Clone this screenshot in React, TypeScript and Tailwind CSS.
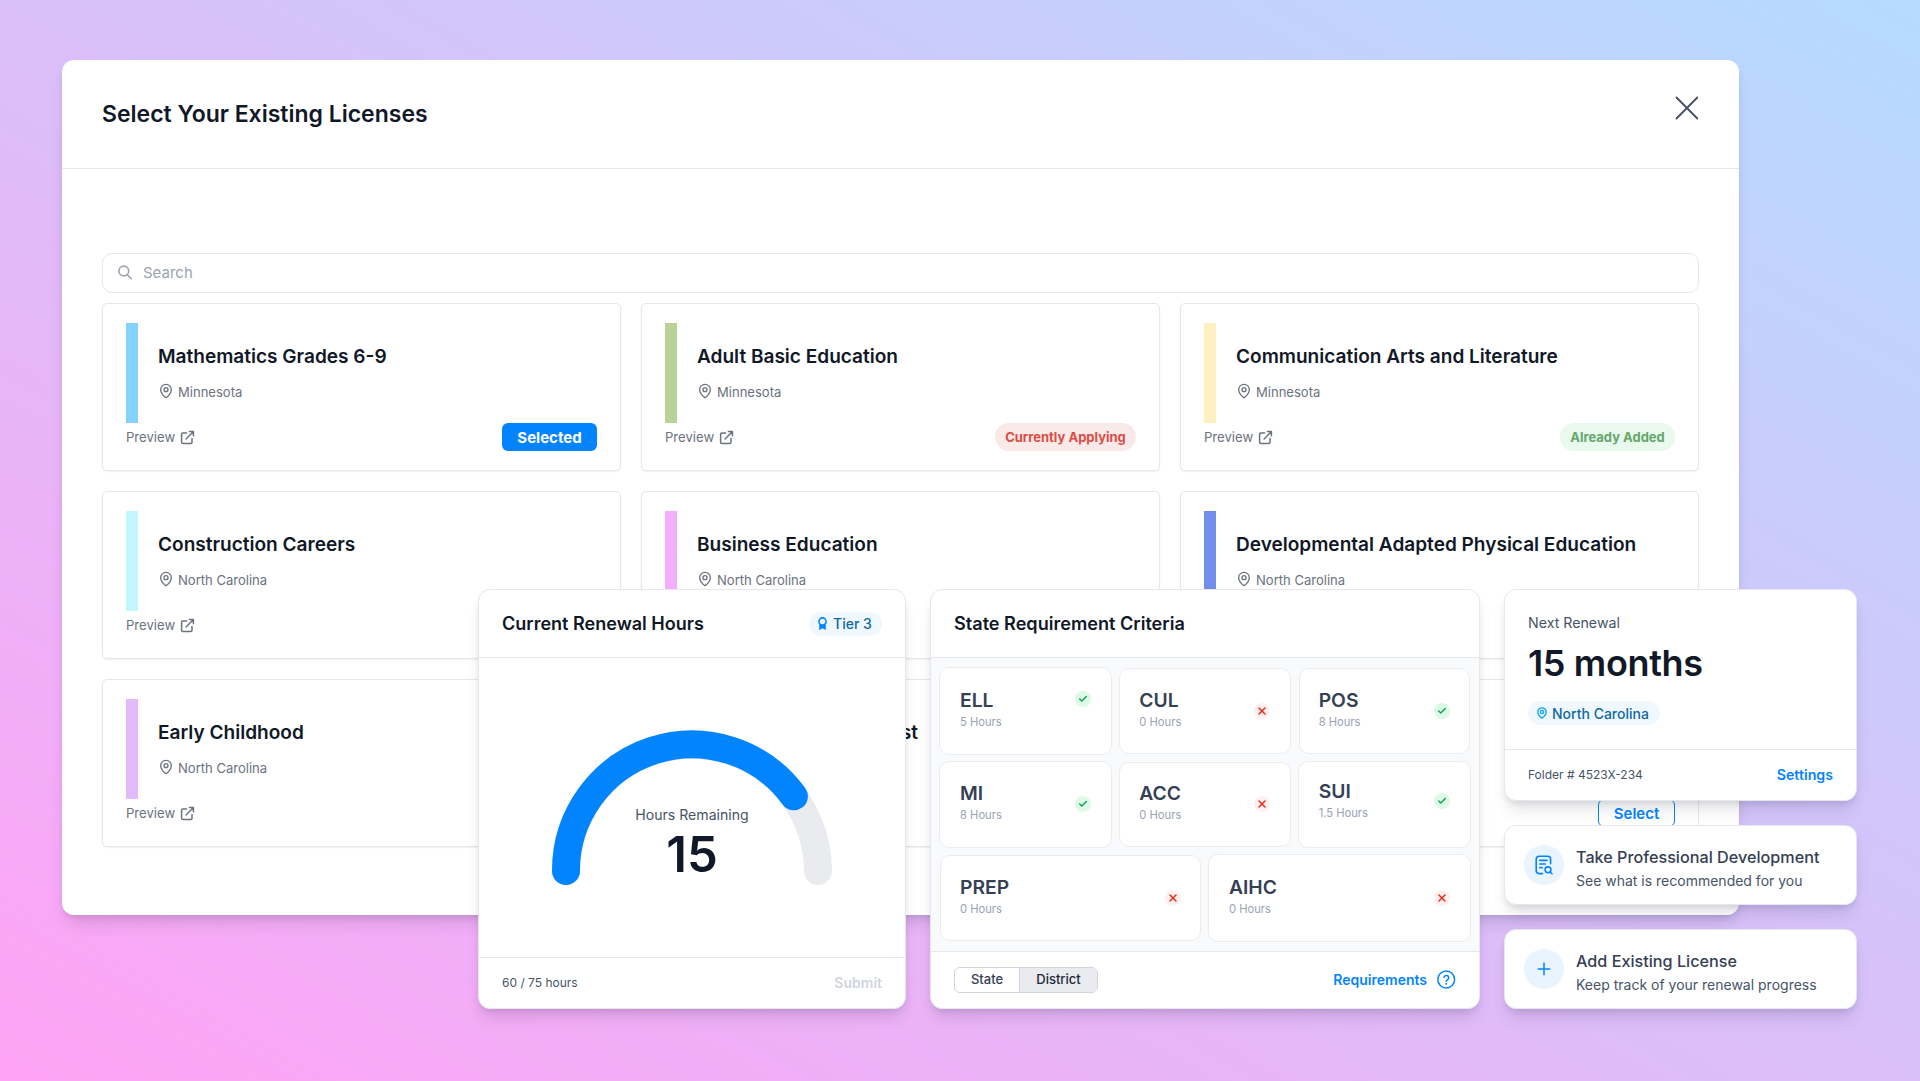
import type { ReactNode } from 'react';
import { Check, MapPin, Plus, X } from 'lucide-react';

type Status = 'selected' | 'applying' | 'added' | 'available';

interface License {
  id: number;
  name?: string;
  state?: string;
  bar: string;
  preview?: boolean;
  status?: Status;
}

interface Requirement {
  code: string;
  hours: string;
  met: boolean;
  cell: string;
  text?: string;
  icon?: string;
}

const LICENSES: License[] = [
  { id: 1, name: 'Mathematics Grades 6-9', state: 'Minnesota', bar: 'bg-[#84d2ff]', preview: true, status: 'selected' },
  { id: 2, name: 'Adult Basic Education', state: 'Minnesota', bar: 'bg-[#b8d297]', preview: true, status: 'applying' },
  { id: 3, name: 'Communication Arts and Literature', state: 'Minnesota', bar: 'bg-[#fff0c2]', preview: true, status: 'added' },
  { id: 4, name: 'Construction Careers', state: 'North Carolina', bar: 'bg-[#c2f6fd]', preview: true },
  { id: 5, name: 'Business Education', state: 'North Carolina', bar: 'bg-[#f3affd]' },
  { id: 6, name: 'Developmental Adapted Physical Education', state: 'North Carolina', bar: 'bg-[#708eea]' },
  { id: 7, name: 'Early Childhood', state: 'North Carolina', bar: 'bg-[#e4bbfa]', preview: true },
  { id: 8, name: 'Library Media Specialist', bar: 'bg-[#ffd6a5]' },
  { id: 9, bar: 'bg-[#a5e8c8]', status: 'available' },
];

const REQUIREMENTS: Requirement[] = [
  { code: 'ELL', hours: '5 Hours', met: true, cell: 'col-span-2 -m-px pr-5 pl-5', icon: 'mb-6' },
  { code: 'CUL', hours: '0 Hours', met: false, cell: 'col-span-2 pr-5 pl-[19px]' },
  { code: 'POS', hours: '8 Hours', met: true, cell: 'col-span-2 pr-[19px] pl-[19px]' },
  { code: 'MI', hours: '8 Hours', met: true, cell: 'col-span-2 -m-px pr-5 pl-5' },
  { code: 'ACC', hours: '0 Hours', met: false, cell: 'col-span-2 pr-5 pl-[19px]' },
  { code: 'SUI', hours: '1.5 Hours', met: true, cell: 'col-span-2 -m-px pr-5 pl-5', text: 'mb-2', icon: 'mb-1.5' },
  { code: 'PREP', hours: '0 Hours', met: false, cell: 'col-span-3 pr-[19px] pl-[19px]' },
  { code: 'AIHC', hours: '0 Hours', met: false, cell: 'col-span-3 -m-px pr-5 pl-5' },
];

const SHADOW = 'shadow-[0_12px_16px_-4px_rgba(16,24,40,0.12),0_4px_6px_-2px_rgba(16,24,40,0.1)]';

function PreviewIcon() {
  return (
    <svg width="15" height="15" viewBox="0 0 16 16" fill="none" stroke="currentColor" strokeWidth="1.6" strokeLinecap="round" strokeLinejoin="round">
      <path d="M7 3.2H3A1.3 1.3 0 0 0 1.7 4.5V13A1.3 1.3 0 0 0 3 14.3h8.5a1.3 1.3 0 0 0 1.3-1.3V9" />
      <path d="M10 1.7h4.3V6M14.3 1.7 6.5 9.5" />
    </svg>
  );
}

function StatusTag({ status }: { status: Status }) {
  if (status === 'selected') {
    return <button className="h-7 w-[95px] rounded-md bg-[#0384ff] pt-0.5 text-[15px] font-bold text-white">Selected</button>;
  }
  if (status === 'applying') {
    return <span className="flex h-7 w-[141px] items-center justify-center rounded-full bg-[#f9e9e8] pt-px text-[13px] font-bold text-[#db4d45]">Currently Applying</span>;
  }
  if (status === 'added') {
    return <span className="flex h-7 w-[115px] items-center justify-center rounded-full bg-[#e9f9ee] pt-px text-[13px] font-bold text-[#65a768]">Already Added</span>;
  }
  return <button className="h-7 w-[77px] rounded-md border border-[#0384ff] bg-white pt-0.5 text-[15px] font-semibold text-[#0384ff]">Select</button>;
}

function LicenseCard({ license }: { license: License }) {
  return (
    <div className="h-[168px] rounded-[5px] border border-[#e6e7ea] bg-white px-[23px] pt-[19px] shadow-[0_1px_2px_rgba(0,0,0,0.06)]">
      <div className="flex h-[100px] gap-5">
        <div className={`w-3 ${license.bar}`} />
        <div className="pt-5">
          <h3 className="text-[19.06px] leading-7 font-semibold whitespace-nowrap text-[#111827]">{license.name}</h3>
          {license.state && (
            <p className="mt-[11px] flex items-center gap-1 text-[13.05px] leading-5 text-[#6b7280]">
              <MapPin className="-mt-0.5 size-4" />
              {license.state}
            </p>
          )}
        </div>
      </div>
      <div className="flex h-7 items-center justify-between">
        {license.preview && (
          <span className="flex items-center gap-[5px] pt-px text-[13.1px] text-[#6b7280]">
            Preview <PreviewIcon />
          </span>
        )}
        {license.status && (
          <div className="ml-auto">
            <StatusTag status={license.status} />
          </div>
        )}
      </div>
    </div>
  );
}

function LicensesModal() {
  return (
    <section className={`h-[855px] w-[1677px] rounded-xl bg-white ${SHADOW}`}>
      <header className="flex h-[109px] items-start justify-between border-b border-[#e5e7eb] px-10">
        <h1 className="pt-[38px] text-[23px] leading-8 font-semibold text-[#111827]">Select Your Existing Licenses</h1>
        <svg className="mt-9 h-6 w-6" viewBox="0 0 24 24" stroke="#475067" strokeWidth="1.9" strokeLinecap="round">
          <path d="M1.5 1.5l20.8 21M22.3 1.5L1.5 22.5" />
        </svg>
      </header>
      <div className="px-10 pt-[84px]">
        <div className="flex h-10 items-center gap-2.5 rounded-[10px] border border-[#e5e7eb] pl-[15px] text-[15px] text-[#9ca3af]">
          <svg className="-mt-px" width="15" height="15" viewBox="0 0 15 15" fill="none" stroke="currentColor" strokeWidth="1.6" strokeLinecap="round">
            <circle cx="5.8" cy="6" r="4.9" />
            <path d="M9.4 9.7l3.8 4" />
          </svg>
          Search
        </div>
        <div className="mt-2.5 grid grid-cols-3 gap-5">
          {LICENSES.map((l) => (
            <LicenseCard key={l.id} license={l} />
          ))}
        </div>
      </div>
    </section>
  );
}

function HoursCard() {
  return (
    <div className={`flex w-[428px] flex-col rounded-xl border border-[#e5e7eb] bg-white ${SHADOW}`}>
      <div className="flex h-[68px] items-center justify-between border-b border-[#e5e7eb] px-[23px]">
        <h2 className="text-[18.05px] font-semibold text-[#111827]">Current Renewal Hours</h2>
        <span className="flex h-6 w-[73px] items-center gap-1.5 rounded-full bg-[#f0f8ff] pl-[9px] text-[14px] font-medium text-[#0e6a9f]">
          <svg width="9" height="13" viewBox="0 0 9 13" fill="none" stroke="#0384ff" strokeWidth="1.6">
            <circle cx="4.5" cy="4.5" r="3.6" />
            <path d="M1.2 7.2V13l3.3-1.8L7.8 13V7.2L4.5 8.6z" fill="#0384ff" stroke="none" />
          </svg>
          Tier 3
        </span>
      </div>
      <div className="flex flex-1 flex-col items-center">
        <svg className="mt-[72px] shrink-0" width="282" height="156" viewBox="0 0 282 156" fill="none" strokeWidth="28" strokeLinecap="round">
          <path d="M15 141a126 126 0 0 1 252 0" stroke="#eaebef" />
          <path d="M15 141A126 126 0 0 1 242.9 66.3" stroke="#0384ff" />
        </svg>
        <p className="-mt-[81px] text-[14.1px] leading-5 text-[#475467]">Hours Remaining</p>
        <p className="mt-[5px] text-[49px] leading-[50px] font-semibold text-[#111827]">15</p>
      </div>
      <div className="flex h-[51px] items-center justify-between border-t border-[#e5e7eb] px-[23px]">
        <span className="text-[12px] text-[#475467]">60 / 75 hours</span>
        <span className="pb-px text-[14px] font-semibold text-[#d0d5dd]">Submit</span>
      </div>
    </div>
  );
}

function CriteriaCard() {
  return (
    <div className={`flex w-[550px] flex-col overflow-hidden rounded-xl border border-[#e5e7eb] bg-white ${SHADOW}`}>
      <div className="flex h-[68px] items-center border-b border-[#e5e7eb] px-[23px]">
        <h2 className="text-[18.1px] font-semibold text-[#111827]">State Requirement Criteria</h2>
      </div>
      <div className="grid flex-1 grid-cols-6 grid-rows-3 gap-2 bg-[#f9fafc] px-[9px] pt-2.5 pb-2.5">
        {REQUIREMENTS.map((r) => (
          <div key={r.code} className={`flex items-center justify-between rounded-[10px] border border-[#eaecf0] bg-white ${r.cell}`}>
            <div className={r.text ?? 'pb-[3px]'}>
              <p className="pb-px text-[19.3px] leading-6 font-semibold text-[#344054]">{r.code}</p>
              <p className="text-[11.2px] leading-[18px] text-[#98a2b3]">{r.hours}</p>
            </div>
            {r.met ? (
              <span className={`flex size-4 items-center justify-center rounded-full bg-[#dcfae6] text-[#12a150] ${r.icon ?? ''}`}>
                <Check className="size-2.5" strokeWidth={3.4} />
              </span>
            ) : (
              <span className={`flex size-4 items-center justify-center rounded-full bg-[#fef0ef] text-[#e02d20] ${r.icon ?? ''}`}>
                <X className="size-3" strokeWidth={3} />
              </span>
            )}
          </div>
        ))}
      </div>
      <div className="flex h-[57px] items-center justify-between border-t border-[#e5e7eb] px-[23px]">
        <div className="flex h-[26px] w-36 overflow-hidden rounded-md border border-[#d0d5dd] text-[13px] font-medium text-[#344054]">
          <span className="flex w-[65px] items-center justify-center border-r border-[#d0d5dd]">State</span>
          <span className="flex flex-1 items-center justify-center bg-[#eaebef] text-[#1d2939]">District</span>
        </div>
        <span className="flex items-center gap-2.5 pb-px text-[14px] font-semibold text-[#0384ff]">
          Requirements
          <svg width="19" height="19" viewBox="0 0 19 19" fill="none" stroke="currentColor" strokeWidth="1.5" strokeLinecap="round" strokeLinejoin="round">
            <circle cx="9.2" cy="9.5" r="8.4" />
            <path d="M7 7.3a2.4 2.4 0 0 1 4.7.7c0 1.6-2.4 2-2.4 3.2" />
            <path d="M9.3 13.7v.1" strokeWidth="1.8" />
          </svg>
        </span>
      </div>
    </div>
  );
}

function NextRenewalCard() {
  return (
    <div className={`flex h-[212px] flex-col rounded-xl border border-[#e5e7eb] bg-white ${SHADOW}`}>
      <div className="flex-1 px-[23px] pt-[23px]">
        <p className="text-[14.2px] leading-5 text-[#475467]">Next Renewal</p>
        <p className="mt-2 text-[36px] leading-[44px] font-semibold tracking-[-0.36px] text-[#111827]">15 months</p>
        <span className="mt-4 flex h-6 w-[132px] items-center gap-[5px] rounded-full bg-[#f0f8ff] pl-[9px] text-[14px] font-medium text-[#0e6a9f]">
          <svg className="shrink-0" width="10" height="12" viewBox="0 0 11 13" fill="none" stroke="#0ba5ec" strokeWidth="1.5" strokeLinejoin="round">
            <path d="M5.5 12.2C3.6 10.8.9 8.3.9 5.4a4.6 4.6 0 0 1 9.2 0c0 2.9-2.7 5.4-4.6 6.8z" />
            <circle cx="5.5" cy="5.4" r="1.8" />
          </svg>
          <span className="whitespace-nowrap">North Carolina</span>
        </span>
      </div>
      <div className="flex h-[51px] items-center justify-between border-t border-[#e5e7eb] px-[23px]">
        <span className="text-[12px] text-[#475467]">Folder # 4523X-234</span>
        <span className="text-[14.2px] font-semibold text-[#0384ff]">Settings</span>
      </div>
    </div>
  );
}

function DocSearchIcon() {
  return (
    <svg width="18" height="20" viewBox="0 0 18 20" fill="none" stroke="currentColor" strokeWidth="1.6" strokeLinecap="round" strokeLinejoin="round">
      <path d="M7.5 18.6H4.2A3 3 0 0 1 1.2 15.6V4.2a3 3 0 0 1 3-3h8.4a3 3 0 0 1 3 3v4.6" />
      <path d="M4.8 5.4h7.2M4.8 9h5.6M4.8 12.6h2.4" />
      <circle cx="13" cy="14.8" r="2.9" />
      <path d="M15.2 17l1.8 1.8" />
    </svg>
  );
}

function ActionCard({ icon, title, text }: { icon: ReactNode; title: string; text: string }) {
  return (
    <div className={`flex h-20 items-center gap-3 rounded-xl border border-[#e5e7eb] bg-white px-[19px] ${SHADOW}`}>
      <span className="flex size-10 items-center justify-center rounded-full bg-[#eaf4ff] text-[#0384ff]">{icon}</span>
      <div className="pt-2">
        <p className="text-[16.2px] leading-6 font-medium text-[#344054]">{title}</p>
        <p className="text-[14px] leading-6 text-[#475467]">{text}</p>
      </div>
    </div>
  );
}

export default function App() {
  return (
    <div className="relative h-[1081px] w-[1920px] overflow-hidden bg-[linear-gradient(to_top_right,#ffa3f5,#b5dbff)] pt-[60px] pl-[62px] font-['Inter',sans-serif]">
      <LicensesModal />
      {/* Dashboard widgets floating over the modal */}
      <div className="absolute top-[589px] left-[478px] flex h-[420px] gap-6">
        <HoursCard />
        <CriteriaCard />
        <div className="flex w-[353px] flex-col gap-6">
          <NextRenewalCard />
          <ActionCard icon={<DocSearchIcon />} title="Take Professional Development" text="See what is recommended for you" />
          <ActionCard icon={<Plus className="size-5" strokeWidth={1.8} />} title="Add Existing License" text="Keep track of your renewal progress" />
        </div>
      </div>
    </div>
  );
}
